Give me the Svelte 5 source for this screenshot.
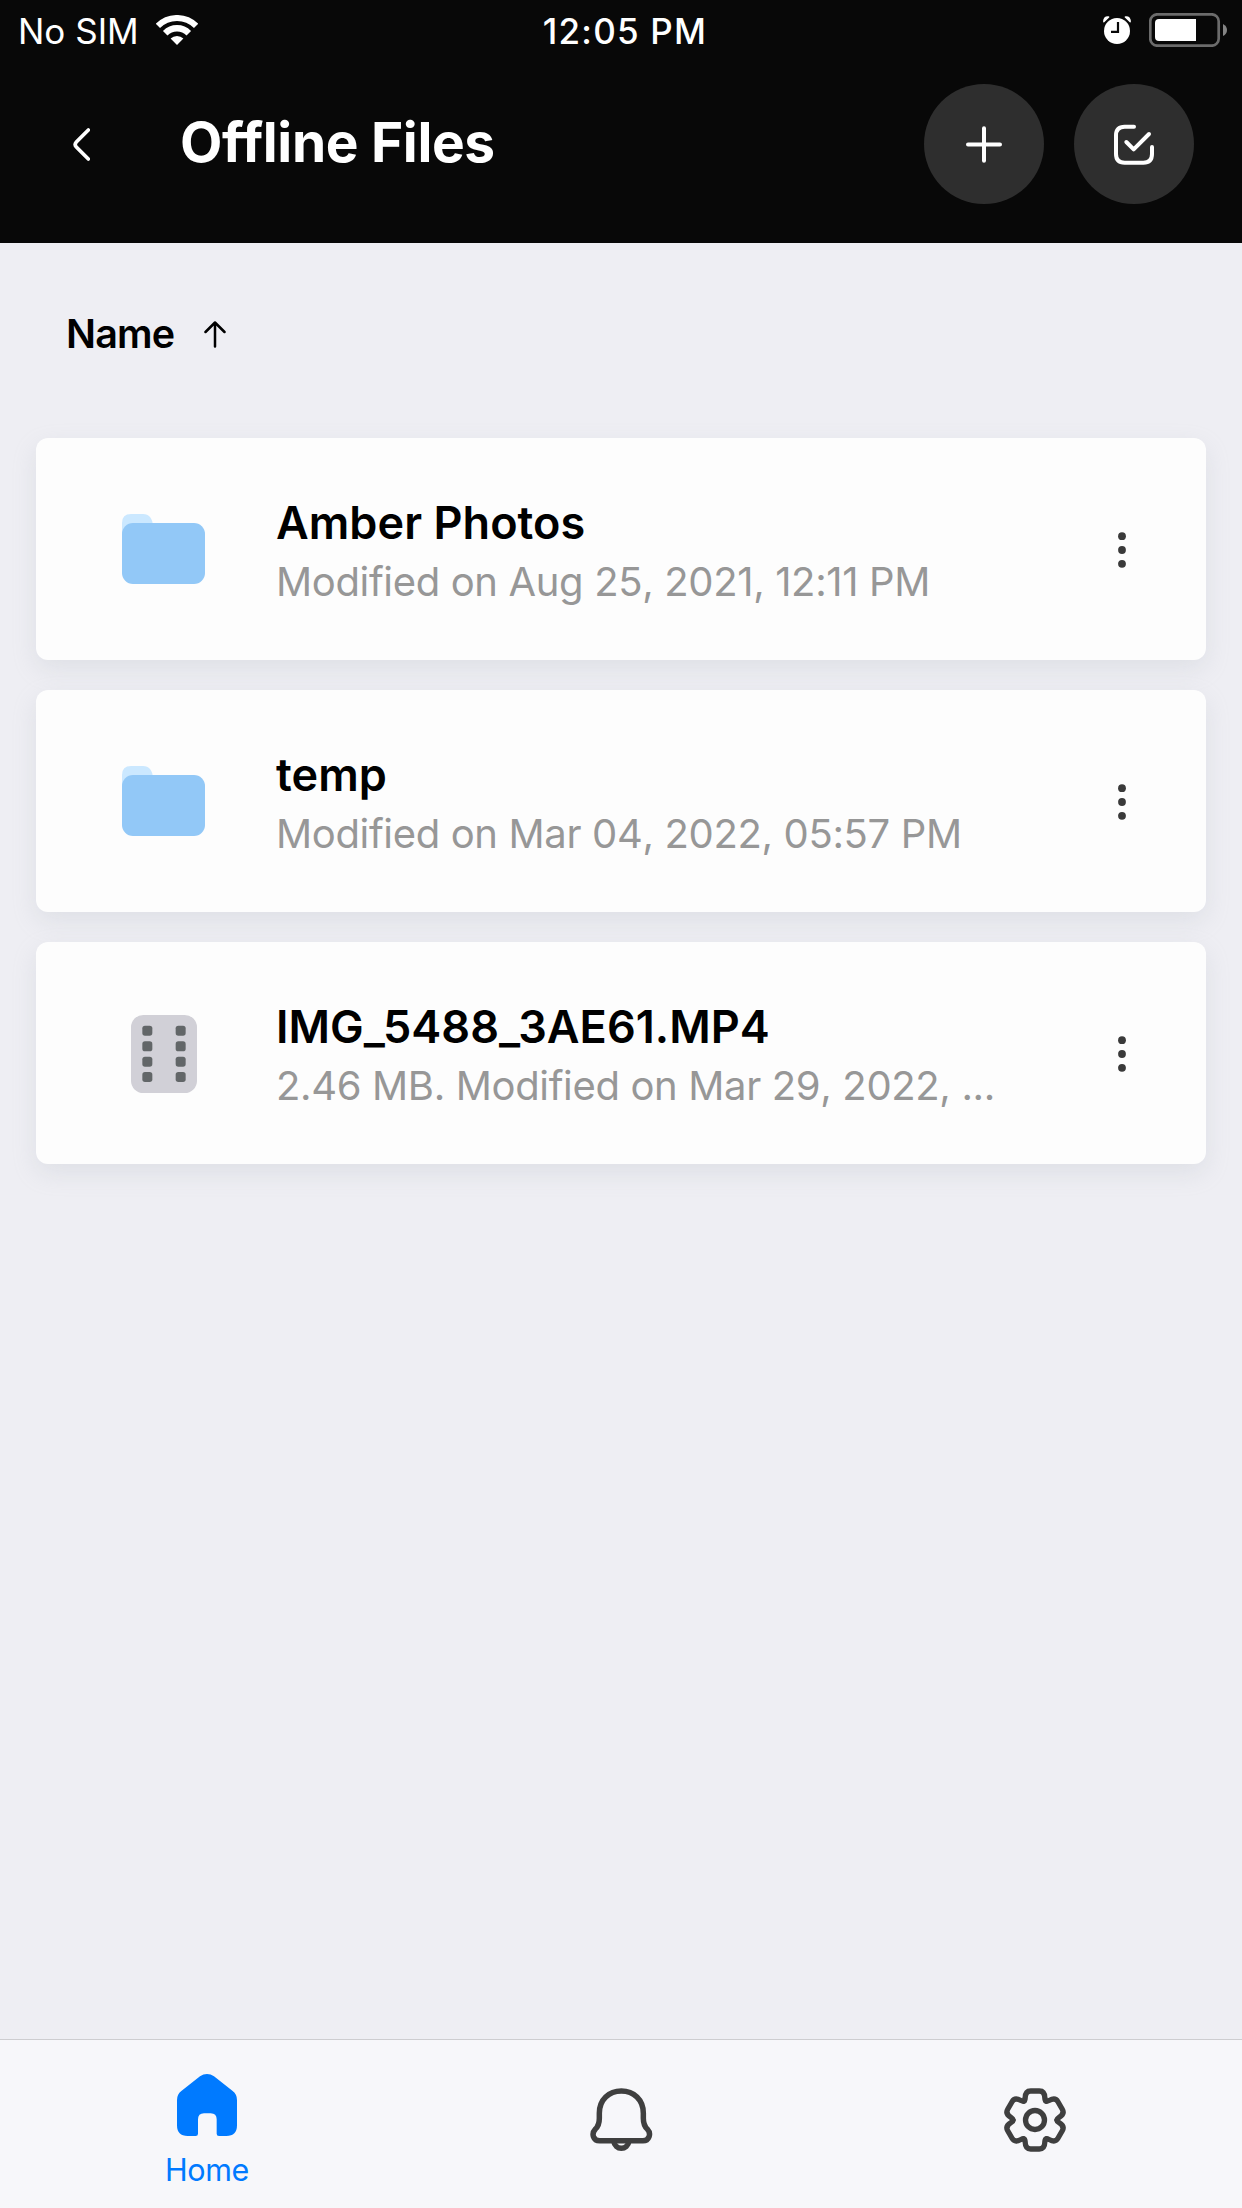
<script lang="ts">
    type FileItem = {
        name: string;
        details: string;
        kind: 'folder' | 'video';
    };

    const files: FileItem[] = [
        { name: 'Amber Photos', details: 'Modified on Aug 25, 2021, 12:11 PM', kind: 'folder' },
        { name: 'temp', details: 'Modified on Mar 04, 2022, 05:57 PM', kind: 'folder' },
        { name: 'IMG_5488_3AE61.MP4', details: '2.46 MB. Modified on Mar 29, 2022, ...', kind: 'video' },
    ];

    const gearAngles = [0, 60, 120, 180, 240, 300];
    const filmRows = [32, 79, 125, 171];

    let activeTab = $state('home');
</script>

<div class="app">
    <header>
        <div class="status">
            <div class="carrier">
                <span class="sim">No SIM</span>
                <svg width="42" height="31" viewBox="0 0 42 31" fill="none" stroke="#fff">
                    <path d="M1.9 10.9A27 27 0 0 1 40.1 10.9" stroke-width="6" />
                    <path d="M9.2 18.2A16.7 16.7 0 0 1 32.8 18.2" stroke-width="6.4" />
                    <path d="M21 30L14.6 23.6A9 9 0 0 1 27.4 23.6Z" fill="#fff" stroke="none" />
                </svg>
            </div>
            <span class="time">12:05 PM</span>
            <div class="power">
                <svg width="28" height="28" viewBox="0 0 28 28" fill="#fff">
                    <circle cx="14" cy="15" r="13" />
                    <path d="M.2 6.2C-.4 2 2.5-.6 6.2.4L6.4 1.2L1 6.4ZM27.8 6.2C28.4 2 25.5-.6 21.8.4L21.6 1.2L27 6.4Z" />
                    <path d="M15 6V15.8H8" fill="none" stroke="#080808" stroke-width="2.2" />
                </svg>
                <svg width="79" height="34" viewBox="0 0 79 34">
                    <rect x="1.3" y="1.3" width="68.4" height="31.4" rx="7" fill="none" stroke="#6b6b6b" stroke-width="2.7" />
                    <path d="M10 6H47V28H10Q6 28 6 24V10Q6 6 10 6Z" fill="#fff" />
                    <path d="M74 11Q78 13 78 17T74 23Z" fill="#848484" />
                </svg>
            </div>
        </div>
        <div class="toolbar">
            <button class="back" aria-label="Back">
                <svg width="17" height="33" viewBox="0 0 51 99" fill="none" stroke="#fff" stroke-width="11" stroke-linecap="round">
                    <path d="M46 6L10 42Q3 49.500 10 57L46 93" />
                </svg>
            </button>
            <h1>Offline Files</h1>
            <button class="round" aria-label="Add">
                <svg width="36" height="37" viewBox="0 0 36 37" stroke="#fff" stroke-width="4" stroke-linecap="round">
                    <path d="M18 2.300V34.700M2 18.500H34" />
                </svg>
            </button>
            <button class="round" aria-label="Select">
                <svg width="40" height="41" viewBox="0 0 120 123" fill="none" stroke="#fff" stroke-width="12" stroke-linecap="round" stroke-linejoin="round">
                    <path d="M60 8H32Q6 8 6 34V90Q6 116 32 116H88Q114 116 114 90V69" />
                    <path d="M37 54L59 76L105 30" />
                </svg>
            </button>
        </div>
    </header>

    <main>
        <button class="sort">
            <span>Name</span>
            <svg width="22" height="27" viewBox="0 0 22 27" fill="none" stroke="#000" stroke-width="2.5" stroke-linecap="round" stroke-linejoin="round">
                <path d="M11 1.500V25.500M1.500 11L11 1.500L20.500 11" />
            </svg>
        </button>

        <ul>
            {#each files as file}
                <li>
                    <div class="thumb">
                        {#if file.kind === 'folder'}
                            <svg width="83" height="70" viewBox="0 0 83 70">
                                <path d="M0 25V9Q0 0 9 0H21Q30 0 31 12V25Z" fill="#cbe8ff" />
                                <rect y="9" width="83" height="61" rx="11" fill="#92c8f7" />
                            </svg>
                        {:else}
                            <svg class="film" width="66" height="78" viewBox="0 0 198 234">
                                <rect width="198" height="234" rx="37" fill="#d1d0d7" />
                                {#each filmRows as y}
                                    <rect x="34" {y} width="30" height="30" rx="8" fill="#626668" />
                                    <rect x="134" {y} width="30" height="30" rx="8" fill="#626668" />
                                {/each}
                            </svg>
                        {/if}
                    </div>
                    <div class="info">
                        <p class="name">{file.name}</p>
                        <p class="details">{file.details}</p>
                    </div>
                    <button class="more" aria-label="More">
                        <svg width="8" height="36" viewBox="0 0 8 36" fill="#3a3a3a">
                            <circle cx="4" cy="4.200" r="3.900" />
                            <circle cx="4" cy="18" r="3.900" />
                            <circle cx="4" cy="31.800" r="3.900" />
                        </svg>
                    </button>
                </li>
            {/each}
        </ul>
    </main>

    <nav>
        <button class={activeTab === 'home' ? 'active' : ''} onclick={() => (activeTab = 'home')}>
            <svg width="60" height="62" viewBox="0 0 180 186" fill="currentColor">
                <path d="M90 0Q101 0 111 7L167 51Q180 61 180 78V154Q180 186 148 186H126Q119 186 119 179V136Q119 118 101 118H81Q63 118 63 136V179Q63 186 56 186H32Q0 186 0 154V78Q0 61 13 51L69 7Q79 0 90 0Z" />
            </svg>
            <span>Home</span>
        </button>
        <button class="plain" aria-label="Notifications" onclick={() => (activeTab = 'notifications')}>
            <svg width="63" height="66" viewBox="89 81.5 189 198" fill="none" stroke="#3f3f3f" stroke-width="16.500">
                <path d="M117 160C117 119 146 93.500 183 93.500S249 119 249 160V175C249 193 253 200 261 208C274 222 266 243 248 243H118C99 243 92 222 105 208C113 200 117 193 117 175Z" />
                <path d="M160 243C164 273 202 273 206 243" />
            </svg>
        </button>
        <button class="plain" aria-label="Settings" onclick={() => (activeTab = 'settings')}>
            <svg width="66" height="66" viewBox="-99 -99 198 198" fill="none" stroke="#3f3f3f" stroke-width="16" stroke-linecap="round" stroke-linejoin="round">
                {#each gearAngles as angle}
                    <path transform="rotate({angle})" d="M-33 -57Q-30 -58 -29.500 -66Q-29 -87 -13 -87H13Q29 -87 29.500 -66Q30 -58 33 -57" />
                {/each}
                <circle r="28.500" />
            </svg>
        </button>
    </nav>
</div>

<style>
    :global(body) {
        margin: 0;
    }

    .app {
        display: flex;
        flex-direction: column;
        width: 1242px;
        height: 2208px;
        background: #eeeef3;
        color: #000;
        font-family: Inter, "Liberation Sans", sans-serif;
        overflow: hidden;
    }

    button {
        padding: 0;
        border: 0;
        background: none;
        color: inherit;
        font: inherit;
        cursor: pointer;
    }

    svg {
        display: block;
        flex: none;
    }

    header {
        height: 243px;
        background: #080808;
        color: #fff;
    }

    .status {
        display: grid;
        grid-template-columns: 1fr auto 1fr;
        align-items: center;
        height: 60px;
        padding: 0 14px 0 18px;
        font-size: 35px;
        line-height: 58px;
    }

    .carrier {
        display: flex;
        align-items: center;
        gap: 17px;
    }

    .sim,
    .time {
        padding-top: 2px;
    }

    .time {
        padding-left: 4px;
        font-weight: 500;
        letter-spacing: 1.2px;
    }

    .power {
        display: flex;
        align-items: center;
        justify-content: flex-end;
        gap: 18px;
    }

    .toolbar {
        display: flex;
        align-items: center;
        height: 120px;
        margin-top: 24px;
        padding: 0 48px 0 73px;
    }

    .back {
        width: 107px;
    }

    h1 {
        flex: 1;
        margin: -5px 0 0;
        font-size: 55px;
        font-weight: 700;
        line-height: 66px;
        letter-spacing: -0.35px;
    }

    .round {
        display: flex;
        align-items: center;
        justify-content: center;
        width: 120px;
        height: 120px;
        border-radius: 50%;
        background: #2e2e2e;
    }

    .round + .round {
        margin-left: 30px;
    }

    main {
        flex: 1;
        padding: 67px 36px 0;
    }

    .sort {
        display: flex;
        align-items: center;
        gap: 30px;
        margin-left: 30px;
        font-size: 39.5px;
        font-weight: 600;
        line-height: 48px;
        letter-spacing: -0.8px;
    }

    ul {
        display: flex;
        flex-direction: column;
        gap: 30px;
        margin: 80px 0 0;
        padding: 0;
        list-style: none;
    }

    li {
        display: flex;
        align-items: center;
        box-sizing: border-box;
        height: 222px;
        padding: 0 80px 0 86px;
        border-radius: 12px;
        background: #fdfdfd;
        box-shadow: 0 9px 24px rgba(160, 172, 180, 0.2);
    }

    .thumb {
        display: flex;
        justify-content: center;
        width: 83px;
    }

    .film,
    .more {
        margin-top: 2px;
    }

    .info {
        flex: 1;
        margin-left: 71px;
        padding-top: 6px;
    }

    p {
        margin: 0;
        white-space: nowrap;
    }

    .name {
        font-size: 45px;
        font-weight: 600;
        line-height: 60px;
        letter-spacing: 0.05px;
    }

    .details {
        color: #979797;
        font-size: 40px;
        font-kerning: none;
        line-height: 58px;
        letter-spacing: -0.35px;
    }

    nav {
        display: grid;
        grid-template-columns: repeat(3, 1fr);
        box-sizing: border-box;
        height: 169px;
        border-top: 1px solid #cdcdd0;
        background: #f7f7fa;
    }

    nav button {
        display: flex;
        flex-direction: column;
        align-items: center;
        padding-top: 34px;
        font-size: 30.5px;
        line-height: 40px;
        letter-spacing: -0.4px;
    }

    nav span {
        margin-top: 14px;
    }

    nav .plain {
        padding-top: 47px;
    }

    .active {
        color: #007aff;
    }
</style>
